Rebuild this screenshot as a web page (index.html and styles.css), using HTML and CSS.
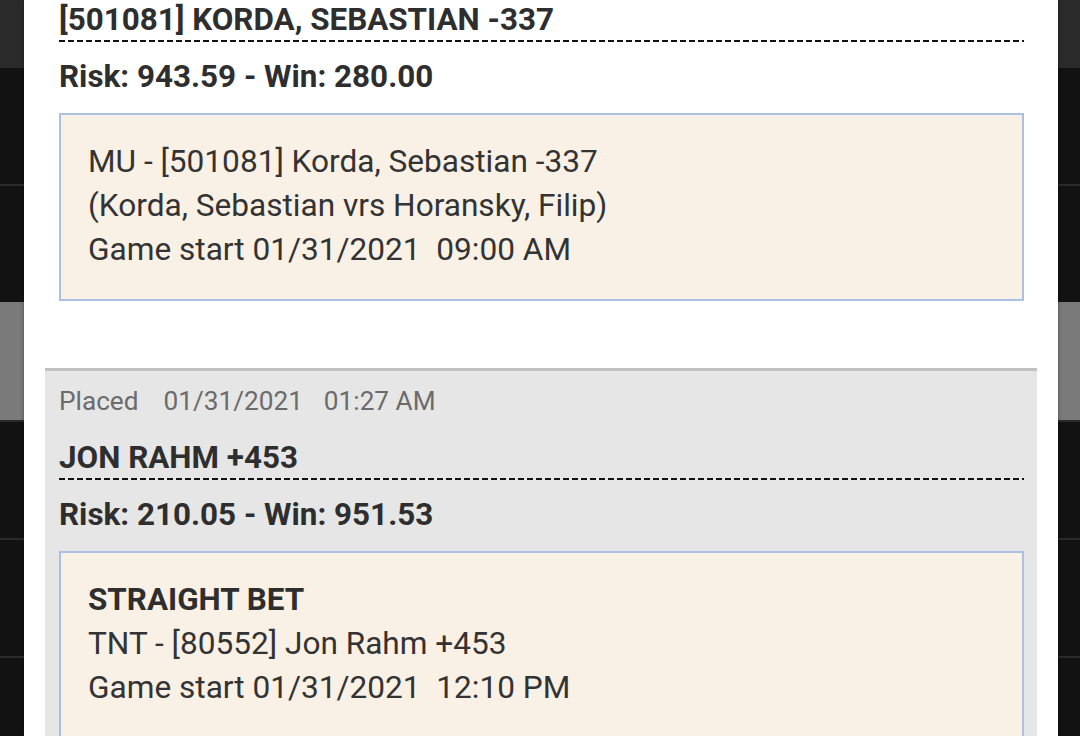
FILE: index.html
```html
<!DOCTYPE html>
<html lang="en">
<head>
<meta charset="utf-8">
<title>Bets</title>
<link rel="stylesheet" href="styles.css">
</head>
<body>
<div class="page">
  <div class="backdrop">
    <div class="bg-header"></div>
    <div class="bg-row"></div>
    <div class="bg-row"></div>
    <div class="bg-row bg-row-active"></div>
    <div class="bg-row"></div>
    <div class="bg-row"></div>
    <div class="bg-row"></div>
  </div>

  <div class="modal">
    <div class="bet bet-first">
      <div class="bet-title">[501081] KORDA, SEBASTIAN -337</div>
      <div class="bet-amounts">Risk: 943.59 - Win: 280.00</div>
      <div class="bet-detail">
        <div class="detail-line">MU - [501081] Korda, Sebastian -337</div>
        <div class="detail-line">(Korda, Sebastian vrs Horansky, Filip)</div>
        <div class="detail-line">Game start 01/31/2021&nbsp; 09:00 AM</div>
      </div>
    </div>

    <div class="bet bet-alt">
      <div class="bet-placed"><span class="placed-label">Placed</span><span class="placed-date">01/31/2021</span><span class="placed-time">01:27 AM</span></div>
      <div class="bet-title">JON RAHM +453</div>
      <div class="bet-amounts">Risk: 210.05 - Win: 951.53</div>
      <div class="bet-detail">
        <div class="detail-line detail-strong">STRAIGHT BET</div>
        <div class="detail-line">TNT - [80552] Jon Rahm +453</div>
        <div class="detail-line">Game start 01/31/2021&nbsp; 12:10 PM</div>
      </div>
    </div>
  </div>
</div>
</body>
</html>
```
FILE: styles.css
```css
html, body {
  margin: 0;
  padding: 0;
  height: 100%;
  overflow: hidden;
}

body {
  font-family: "Roboto", "Liberation Sans", sans-serif;
  background: #121212;
}

.page {
  position: relative;
  width: 1080px;
  height: 736px;
  overflow: hidden;
}

/* list behind the modal */
.backdrop {
  display: flex;
  flex-direction: column;
}

.bg-header {
  height: 66px;
  background: #2a2a2a;
}

.bg-row {
  height: 116px;
  border-top: 2px solid #2b2b2b;
  background: #121212;
}

.bg-row-active {
  background: #7a7a7a;
  border-top-color: #7a7a7a;
}

/* modal sheet */
.modal {
  position: absolute;
  top: 0;
  left: 24px;
  width: 1034px;
  bottom: 0;
  background: #ffffff;
  box-shadow: 0 0 4px rgba(0, 0, 0, 0.35);
  padding: 0 21px;
  box-sizing: border-box;
}

.bet {
  padding: 12px 13px 67px 14px;
  color: #303030;
}

.bet-first {
  padding-top: 0;
}

.bet-alt {
  background: #e6e6e6;
  border-top: 3px solid #c1c1c1;
}

.bet-placed {
  font-size: 26.2px;
  line-height: 36px;
  color: #6b6b6b;
  margin-bottom: 19px;
}

.placed-label {
  margin-right: 25px;
}

.placed-date {
  margin-right: 21px;
}

.bet-title {
  font-size: 31.4px;
  font-weight: 700;
  line-height: 40px;
  padding-bottom: 2px;
  color: #2e2e2e;
  background: repeating-linear-gradient(90deg, #111111 0 6px, transparent 6px 9px) left bottom / 100% 2px no-repeat;
}

.bet-amounts {
  margin-top: 15px;
  font-size: 31.4px;
  font-weight: 700;
  line-height: 40px;
  color: #2e2e2e;
}

.bet-detail {
  margin-top: 16px;
  background: #faf1e6;
  border: 2px solid #abc1e3;
  padding: 25px 27px 27px;
}

.detail-line {
  font-size: 31.6px;
  line-height: 44px;
  color: #333333;
}

.detail-strong {
  font-weight: 700;
  font-size: 31.4px;
  color: #2e2e2e;
}
```
